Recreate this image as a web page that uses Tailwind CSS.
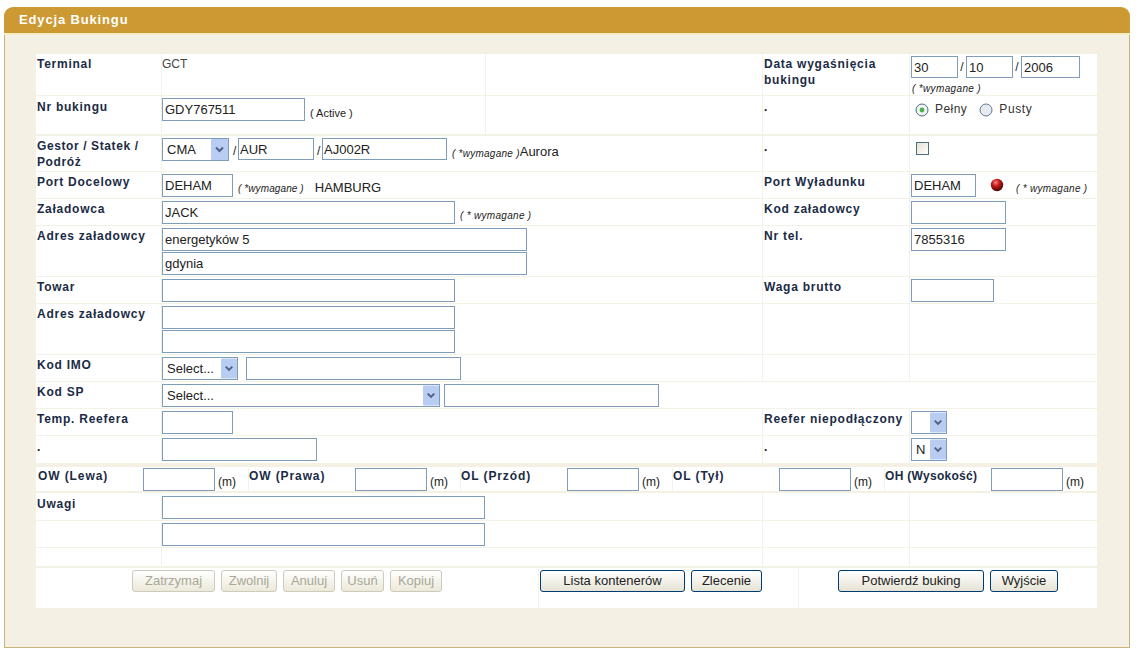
<!DOCTYPE html>
<html lang="pl">
<head>
    <meta charset="UTF-8">
    <title>Edycja Bukingu</title>
    <script src="https://cdn.jsdelivr.net/npm/@tailwindcss/browser@4"></script>
</head>
<body class="bg-white">
<div class="ml-[4px] mt-[7px] w-[1126px] h-[641px] flex flex-col font-['Liberation_Sans',Arial,sans-serif] text-[13px] text-[#222]">
    <!-- naglowek -->
    <div class="h-[28px] shrink-0 bg-[#cc9933] rounded-t-[9px] pl-[15px] pt-[5px] text-[13px] leading-[15px] font-bold tracking-[0.85px] text-white border-b-2 border-[#f5eec4]">Edycja Bukingu</div>

    <div class="flex-1 bg-[#f4f1e4] border-x border-b border-[#c9b477] pl-[31px] pt-[19px]">
        <div class="w-[1061px] h-[554px] bg-white flex flex-col">

            <!-- Terminal -->
            <div class="h-[42px] grid grid-cols-[125px_324px_277px_147px_188px] border-b border-[#f2f2e6]">
                <div class="pl-[1px] pt-[3px] text-[12px] font-bold tracking-[0.75px] leading-[14px] text-[#1b2b45]">Terminal</div>
                <div class="border-l border-[#f2f2e6] pt-[3px] text-[12px] leading-[14px] text-[#444]">GCT</div>
                <div class="border-l border-[#f2f2e6]"></div>
                <div class="border-l border-[#f2f2e6] pl-[1px] pt-[2px] text-[12px] font-bold tracking-[0.75px] leading-[16px] text-[#1b2b45]">Data wygaśnięcia bukingu</div>
                <div class="border-l border-[#f2f2e6] pl-[1px] pt-[2px]">
                    <div class="flex items-center">
                        <input class="h-[22px] w-[47px] border border-[#7f9db9] px-[2px]" value="30">
                        <span class="w-[8px] text-center text-[12px]">/</span>
                        <input class="h-[22px] w-[47px] border border-[#7f9db9] px-[2px]" value="10">
                        <span class="w-[8px] text-center text-[12px]">/</span>
                        <input class="h-[22px] w-[59px] border border-[#7f9db9] px-[2px]" value="2006">
                    </div>
                    <div class="pt-[5px] pl-px text-[10px] leading-[12px] italic tracking-[0.35px]">( *wymagane )</div>
                </div>
            </div>

            <!-- Nr bukingu -->
            <div class="h-[40px] grid grid-cols-[125px_324px_277px_147px_188px] border-b-2 border-[#f2f2e6]">
                <div class="pl-[1px] pt-[4px] text-[12px] font-bold tracking-[0.75px] leading-[14px] text-[#1b2b45]">Nr bukingu</div>
                <div class="border-l border-[#f2f2e6] pt-[2px] flex items-start">
                    <input class="h-[23px] w-[143px] border border-[#7f9db9] px-[2px]" value="GDY767511">
                    <span class="ml-[5px] mt-[9px] text-[11px] leading-[13px]">( Active )</span>
                </div>
                <div class="border-l border-[#f2f2e6]"></div>
                <div class="border-l border-[#f2f2e6] pl-[1px] pt-[4px] text-[12px] font-bold leading-[14px]">.</div>
                <div class="border-l border-[#f2f2e6] pl-[5px] pt-[6px] flex items-start text-[12px] leading-[15px] text-[#333]">
                    <svg class="w-[14px] h-[14px] mt-px" viewBox="0 0 14 14"><circle cx="7" cy="7" r="6" fill="#f0f3f3" stroke="#4f6d80"/><circle cx="7" cy="7" r="2.4" fill="#4fb04f"/></svg>
                    <span class="ml-[6px] tracking-[0.45px]">Pełny</span>
                    <svg class="w-[14px] h-[14px] mt-px ml-[12px]" viewBox="0 0 14 14"><circle cx="7" cy="7" r="6" fill="#e8eaef" stroke="#5f7c90"/></svg>
                    <span class="ml-[6px] tracking-[0.6px]">Pusty</span>
                </div>
            </div>

            <!-- Gestor -->
            <div class="h-[36px] grid grid-cols-[125px_601px_147px_188px] border-b border-[#f2f2e6]">
                <div class="pl-[1px] pt-[2px] text-[12px] font-bold tracking-[0.6px] leading-[16px] text-[#1b2b45]">Gestor / Statek / Podróż</div>
                <div class="border-l border-[#f2f2e6] pt-[2px] flex items-start">
                    <div class="relative w-[67px] h-[23px]">
                        <select class="appearance-none w-full h-full border border-[#7f9db9] pl-[4px]"><option>CMA</option></select>
                        <svg class="absolute right-px top-px w-[17px] h-[21px] pointer-events-none" viewBox="0 0 17 21"><rect width="17" height="21" rx="1" fill="#b9cdf3"/><path d="M5 8.5l3.5 3.5 3.5-3.5" fill="none" stroke="#4d6185" stroke-width="2"/></svg>
                    </div>
                    <span class="ml-[4px] mt-[4px] w-[5px] text-[12px]">/</span>
                    <input class="h-[22px] w-[76px] border border-[#7f9db9] px-[1px]" value="AUR">
                    <span class="ml-[3px] mt-[4px] w-[5px] text-[12px]">/</span>
                    <input class="h-[22px] w-[125px] border border-[#7f9db9] px-[1px]" value="AJ002R">
                    <span class="ml-[5px] mt-[9px] text-[10px] leading-[13px] italic tracking-[0.25px] whitespace-nowrap">( *wymagane )</span><span class="mt-[6px] leading-[15px]">Aurora</span>
                </div>
                <div class="border-l border-[#f2f2e6] pl-[1px] pt-[4px] text-[12px] font-bold leading-[14px]">.</div>
                <div class="border-l border-[#f2f2e6] pl-[6px] pt-[6px]">
                    <div class="w-[13px] h-[13px] border border-[#4f6d80] bg-gradient-to-br from-[#e4e0d4] to-white"></div>
                </div>
            </div>

            <!-- Port Docelowy -->
            <div class="h-[27px] grid grid-cols-[125px_601px_147px_188px] border-b border-[#f2f2e6]">
                <div class="pl-[1px] pt-[3px] text-[12px] font-bold tracking-[0.75px] leading-[14px] text-[#1b2b45]">Port Docelowy</div>
                <div class="border-l border-[#f2f2e6] pt-[2px] flex items-start">
                    <input class="h-[23px] w-[71px] border border-[#7f9db9] px-[2px]" value="DEHAM">
                    <span class="ml-[5px] mt-[8px] text-[10px] leading-[13px] italic tracking-[0.1px]">( *wymagane )</span>
                    <span class="ml-[11px] mt-[6px] leading-[15px]">HAMBURG</span>
                </div>
                <div class="border-l border-[#f2f2e6] pl-[1px] pt-[3px] text-[12px] font-bold tracking-[0.75px] leading-[14px] text-[#1b2b45]">Port Wyładunku</div>
                <div class="border-l border-[#f2f2e6] pl-[1px] pt-[2px] flex items-start">
                    <input class="h-[23px] w-[65px] border border-[#7f9db9] px-[2px]" value="DEHAM">
                    <svg class="ml-[14px] mt-[4px] w-[14px] h-[14px]" viewBox="0 0 14 14"><defs><radialGradient id="kula" cx="0.4" cy="0.3" r="0.7"><stop offset="0" stop-color="#f28a8a"/><stop offset="0.4" stop-color="#c81c1c"/><stop offset="1" stop-color="#4d0505"/></radialGradient></defs><circle cx="7" cy="7" r="6.2" fill="url(#kula)"/></svg>
                    <span class="ml-[12px] mt-[8px] text-[10px] leading-[13px] italic tracking-[0.3px] whitespace-nowrap">( * wymagane )</span>
                </div>
            </div>

            <!-- Zaladowca -->
            <div class="h-[27px] grid grid-cols-[125px_601px_147px_188px] border-b border-[#f2f2e6]">
                <div class="pl-[1px] pt-[3px] text-[12px] font-bold tracking-[0.75px] leading-[14px] text-[#1b2b45]">Załadowca</div>
                <div class="border-l border-[#f2f2e6] pt-[2px] flex items-start">
                    <input class="h-[23px] w-[293px] border border-[#7f9db9] px-[2px]" value="JACK">
                    <span class="ml-[5px] mt-[8px] text-[10px] leading-[13px] italic tracking-[0.3px]">( * wymagane )</span>
                </div>
                <div class="border-l border-[#f2f2e6] pl-[1px] pt-[3px] text-[12px] font-bold tracking-[0.75px] leading-[14px] text-[#1b2b45]">Kod załadowcy</div>
                <div class="border-l border-[#f2f2e6] pl-[1px] pt-[2px]">
                    <input class="h-[23px] w-[95px] border border-[#7f9db9] px-[2px]">
                </div>
            </div>

            <!-- Adres zaladowcy -->
            <div class="h-[51px] grid grid-cols-[125px_601px_147px_188px] border-b border-[#f2f2e6]">
                <div class="pl-[1px] pt-[3px] text-[12px] font-bold tracking-[0.75px] leading-[14px] text-[#1b2b45]">Adres załadowcy</div>
                <div class="border-l border-[#f2f2e6] pt-[2px] flex flex-col gap-[1px]">
                    <input class="h-[23px] w-[365px] border border-[#7f9db9] px-[2px]" value="energetyków 5">
                    <input class="h-[23px] w-[365px] border border-[#7f9db9] px-[2px]" value="gdynia">
                </div>
                <div class="border-l border-[#f2f2e6] pl-[1px] pt-[3px] text-[12px] font-bold tracking-[0.75px] leading-[14px] text-[#1b2b45]">Nr tel.</div>
                <div class="border-l border-[#f2f2e6] pl-[1px] pt-[2px]">
                    <input class="h-[23px] w-[95px] border border-[#7f9db9] px-[2px]" value="7855316">
                </div>
            </div>

            <!-- Towar -->
            <div class="h-[27px] grid grid-cols-[125px_601px_147px_188px] border-b border-[#f2f2e6]">
                <div class="pl-[1px] pt-[3px] text-[12px] font-bold tracking-[0.75px] leading-[14px] text-[#1b2b45]">Towar</div>
                <div class="border-l border-[#f2f2e6] pt-[2px]">
                    <input class="h-[23px] w-[293px] border border-[#7f9db9] px-[2px]">
                </div>
                <div class="border-l border-[#f2f2e6] pl-[1px] pt-[3px] text-[12px] font-bold tracking-[0.75px] leading-[14px] text-[#1b2b45]">Waga brutto</div>
                <div class="border-l border-[#f2f2e6] pl-[1px] pt-[2px]">
                    <input class="h-[23px] w-[83px] border border-[#7f9db9] px-[2px]">
                </div>
            </div>

            <!-- Adres zaladowcy 2 -->
            <div class="h-[51px] grid grid-cols-[125px_601px_147px_188px] border-b border-[#f2f2e6]">
                <div class="pl-[1px] pt-[3px] text-[12px] font-bold tracking-[0.75px] leading-[14px] text-[#1b2b45]">Adres załadowcy</div>
                <div class="border-l border-[#f2f2e6] pt-[2px] flex flex-col gap-[1px]">
                    <input class="h-[23px] w-[293px] border border-[#7f9db9] px-[2px]">
                    <input class="h-[23px] w-[293px] border border-[#7f9db9] px-[2px]">
                </div>
                <div class="border-l border-[#f2f2e6]"></div>
                <div class="border-l border-[#f2f2e6]"></div>
            </div>

            <!-- Kod IMO -->
            <div class="h-[27px] grid grid-cols-[125px_601px_147px_188px] border-b border-[#f2f2e6]">
                <div class="pl-[1px] pt-[3px] text-[12px] font-bold tracking-[0.75px] leading-[14px] text-[#1b2b45]">Kod IMO</div>
                <div class="border-l border-[#f2f2e6] pt-[2px] flex items-start">
                    <div class="relative w-[76px] h-[23px]">
                        <select class="appearance-none w-full h-full border border-[#7f9db9] pl-[4px]"><option>Select...</option></select>
                        <svg class="absolute right-px top-px w-[16px] h-[21px] pointer-events-none" viewBox="0 0 17 21"><rect width="17" height="21" rx="1" fill="#b9cdf3"/><path d="M5 8.5l3.5 3.5 3.5-3.5" fill="none" stroke="#4d6185" stroke-width="2"/></svg>
                    </div>
                    <input class="ml-[8px] h-[23px] w-[215px] border border-[#7f9db9] px-[2px]">
                </div>
                <div class="border-l border-[#f2f2e6]"></div>
                <div class="border-l border-[#f2f2e6]"></div>
            </div>

            <!-- Kod SP -->
            <div class="h-[27px] grid grid-cols-[125px_936px] border-b border-[#f2f2e6]">
                <div class="pl-[1px] pt-[3px] text-[12px] font-bold tracking-[0.75px] leading-[14px] text-[#1b2b45]">Kod SP</div>
                <div class="border-l border-[#f2f2e6] pt-[2px] flex items-start">
                    <div class="relative w-[278px] h-[23px]">
                        <select class="appearance-none w-full h-full border border-[#7f9db9] pl-[4px]"><option>Select...</option></select>
                        <svg class="absolute right-px top-px w-[16px] h-[21px] pointer-events-none" viewBox="0 0 17 21"><rect width="17" height="21" rx="1" fill="#b9cdf3"/><path d="M5 8.5l3.5 3.5 3.5-3.5" fill="none" stroke="#4d6185" stroke-width="2"/></svg>
                    </div>
                    <input class="ml-[4px] h-[23px] w-[215px] border border-[#7f9db9] px-[2px]">
                </div>
            </div>

            <!-- Temp. Reefera -->
            <div class="h-[27px] grid grid-cols-[125px_601px_147px_188px] border-b border-[#f2f2e6]">
                <div class="pl-[1px] pt-[3px] text-[12px] font-bold tracking-[0.75px] leading-[14px] text-[#1b2b45]">Temp. Reefera</div>
                <div class="border-l border-[#f2f2e6] pt-[2px]">
                    <input class="h-[23px] w-[71px] border border-[#7f9db9] px-[2px]">
                </div>
                <div class="border-l border-[#f2f2e6] pl-[1px] pt-[3px] text-[12px] font-bold tracking-[0.75px] leading-[14px] text-[#1b2b45] whitespace-nowrap">Reefer niepodłączony</div>
                <div class="border-l border-[#f2f2e6] pl-[1px] pt-[2px]">
                    <div class="relative w-[36px] h-[23px]">
                        <select class="appearance-none w-full h-full border border-[#7f9db9] pl-[4px]"><option></option></select>
                        <svg class="absolute right-px top-px w-[16px] h-[21px] pointer-events-none" viewBox="0 0 17 21"><rect width="17" height="21" rx="1" fill="#b9cdf3"/><path d="M5 8.5l3.5 3.5 3.5-3.5" fill="none" stroke="#4d6185" stroke-width="2"/></svg>
                    </div>
                </div>
            </div>

            <!-- kropka -->
            <div class="h-[27px] grid grid-cols-[125px_601px_147px_188px]">
                <div class="pl-[1px] pt-[4px] text-[12px] font-bold leading-[14px]">.</div>
                <div class="border-l border-[#f2f2e6] pt-[2px]">
                    <input class="h-[23px] w-[155px] border border-[#7f9db9] px-[2px]">
                </div>
                <div class="border-l border-[#f2f2e6] pl-[1px] pt-[4px] text-[12px] font-bold leading-[14px]">.</div>
                <div class="border-l border-[#f2f2e6] pl-[1px] pt-[2px]">
                    <div class="relative w-[36px] h-[23px]">
                        <select class="appearance-none w-full h-full border border-[#7f9db9] pl-[4px]"><option>N</option></select>
                        <svg class="absolute right-px top-px w-[16px] h-[21px] pointer-events-none" viewBox="0 0 17 21"><rect width="17" height="21" rx="1" fill="#b9cdf3"/><path d="M5 8.5l3.5 3.5 3.5-3.5" fill="none" stroke="#4d6185" stroke-width="2"/></svg>
                    </div>
                </div>
            </div>

            <!-- wymiary OW / OL / OH -->
            <div class="h-[30px] shrink-0 border-t-4 border-b-2 border-[#f4f1e4] pl-[2px] pt-[1px] grid grid-cols-[210px_212px_212px_212px_219px]">
                <div class="flex items-start">
                    <span class="w-[105px] pt-[1px] text-[12px] font-bold tracking-[0.9px] leading-[14px] text-[#1b2b45] whitespace-nowrap">OW (Lewa)</span>
                    <input class="h-[23px] w-[72px] border border-[#7f9db9] px-[2px]">
                    <span class="ml-[3px] mt-[7px] text-[12px] leading-[15px]">(m)</span>
                </div>
                <div class="flex items-start border-l border-[#f2f2e6]">
                    <span class="w-[106px] pt-[1px] text-[12px] font-bold tracking-[0.9px] leading-[14px] text-[#1b2b45] whitespace-nowrap">OW (Prawa)</span>
                    <input class="h-[23px] w-[72px] border border-[#7f9db9] px-[2px]">
                    <span class="ml-[3px] mt-[7px] text-[12px] leading-[15px]">(m)</span>
                </div>
                <div class="flex items-start border-l border-[#f2f2e6]">
                    <span class="w-[106px] pt-[1px] text-[12px] font-bold tracking-[0.9px] leading-[14px] text-[#1b2b45] whitespace-nowrap">OL (Przód)</span>
                    <input class="h-[23px] w-[72px] border border-[#7f9db9] px-[2px]">
                    <span class="ml-[3px] mt-[7px] text-[12px] leading-[15px]">(m)</span>
                </div>
                <div class="flex items-start border-l border-[#f2f2e6]">
                    <span class="w-[106px] pt-[1px] text-[12px] font-bold tracking-[0.9px] leading-[14px] text-[#1b2b45] whitespace-nowrap">OL (Tył)</span>
                    <input class="h-[23px] w-[72px] border border-[#7f9db9] px-[2px]">
                    <span class="ml-[3px] mt-[7px] text-[12px] leading-[15px]">(m)</span>
                </div>
                <div class="flex items-start border-l border-[#f2f2e6]">
                    <span class="w-[106px] pt-[1px] text-[12px] font-bold tracking-[0.3px] leading-[14px] text-[#1b2b45] whitespace-nowrap">OH (Wysokość)</span>
                    <input class="h-[23px] w-[72px] border border-[#7f9db9] px-[2px]">
                    <span class="ml-[3px] mt-[7px] text-[12px] leading-[15px]">(m)</span>
                </div>
            </div>

            <!-- Uwagi -->
            <div class="h-[28px] grid grid-cols-[125px_601px_147px_188px] border-b border-[#f2f2e6]">
                <div class="pl-[1px] pt-[4px] text-[12px] font-bold tracking-[0.75px] leading-[14px] text-[#1b2b45]">Uwagi</div>
                <div class="border-l border-[#f2f2e6] pt-[3px]">
                    <input class="h-[23px] w-[323px] border border-[#7f9db9] px-[2px]">
                </div>
                <div class="border-l border-[#f2f2e6]"></div>
                <div class="border-l border-[#f2f2e6]"></div>
            </div>
            <div class="h-[27px] grid grid-cols-[125px_601px_147px_188px] border-b border-[#f2f2e6]">
                <div></div>
                <div class="border-l border-[#f2f2e6] pt-[2px]">
                    <input class="h-[23px] w-[323px] border border-[#7f9db9] px-[2px]">
                </div>
                <div class="border-l border-[#f2f2e6]"></div>
                <div class="border-l border-[#f2f2e6]"></div>
            </div>
            <div class="h-[20px] grid grid-cols-[125px_601px_147px_188px] border-b-2 border-[#f2f2e6]">
                <div></div>
                <div class="border-l border-[#f2f2e6]"></div>
                <div class="border-l border-[#f2f2e6]"></div>
                <div class="border-l border-[#f2f2e6]"></div>
            </div>

            <!-- przyciski -->
            <div class="flex-1 grid grid-cols-[502px_260px_299px]">
                <div class="pt-[2px] pl-[96px] flex items-start gap-[6px]">
                    <button disabled class="h-[22px] w-[83px] rounded-[3px] border border-[#cdcbbd] bg-gradient-to-b from-white to-[#ece9d8] text-[#a9a798]">Zatrzymaj</button>
                    <button disabled class="h-[22px] w-[56px] rounded-[3px] border border-[#cdcbbd] bg-gradient-to-b from-white to-[#ece9d8] text-[#a9a798]">Zwolnij</button>
                    <button disabled class="h-[22px] w-[52px] rounded-[3px] border border-[#cdcbbd] bg-gradient-to-b from-white to-[#ece9d8] text-[#a9a798]">Anuluj</button>
                    <button disabled class="h-[22px] w-[43px] rounded-[3px] border border-[#cdcbbd] bg-gradient-to-b from-white to-[#ece9d8] text-[#a9a798]">Usuń</button>
                    <button disabled class="h-[22px] w-[52px] rounded-[3px] border border-[#cdcbbd] bg-gradient-to-b from-white to-[#ece9d8] text-[#a9a798]">Kopiuj</button>
                </div>
                <div class="border-l border-[#f2f2e6] pt-[2px] pl-[1px] flex items-start gap-[6px]">
                    <button class="h-[22px] w-[145px] rounded-[3px] border border-[#003c74] bg-gradient-to-b from-white to-[#e6e3d4] text-[#222]">Lista kontenerów</button>
                    <button class="h-[22px] w-[71px] rounded-[3px] border border-[#003c74] bg-gradient-to-b from-white to-[#e6e3d4] text-[#222]">Zlecenie</button>
                </div>
                <div class="border-l border-[#f2f2e6] pt-[2px] pl-[39px] flex items-start gap-[6px]">
                    <button class="h-[22px] w-[146px] rounded-[3px] border border-[#003c74] bg-gradient-to-b from-white to-[#e6e3d4] text-[#222]">Potwierdź buking</button>
                    <button class="h-[22px] w-[68px] rounded-[3px] border border-[#003c74] bg-gradient-to-b from-white to-[#e6e3d4] text-[#222]">Wyjście</button>
                </div>
            </div>
        </div>
    </div>
</div>
</body>
</html>
